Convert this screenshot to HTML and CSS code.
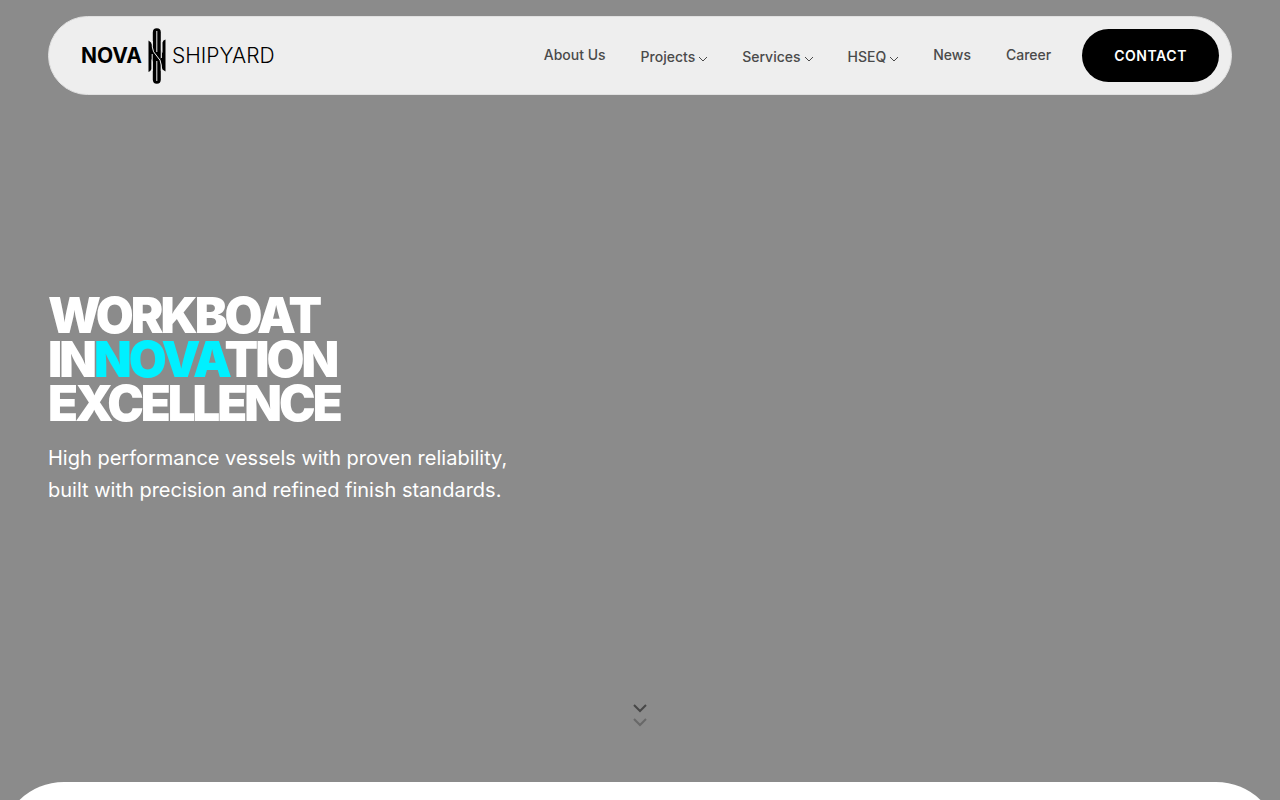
FILE: index.html
```html
<!DOCTYPE html>
<html lang="en">
<head>
<meta charset="utf-8">
<meta name="viewport" content="width=device-width, initial-scale=1">
<title>Nova Shipyard</title>
<link rel="stylesheet" href="styles.css">
</head>
<body>
<div class="page">
  <header class="header">
    <a class="logo" href="#" aria-label="Nova Shipyard">
      <span class="logo-nova">NOVA</span>
      <svg class="logo-mark" viewBox="0 0 18 56" width="18" height="56" aria-hidden="true">
        <path d="M4.800 4.500Q4.800 .3 8.800 .3T12.800 4.500V51.500Q12.800 55.700 8.800 55.700T4.800 51.500Z"/>
        <path class="logo-line" d="M8.800 3V24M8.800 33V53"/>
        <path d="M.5 12.500L3 14.500L5 19V34L3.500 31V41Q2.500 43.500 .5 44Z"/>
        <path d="M17.500 11.500Q15 12 14.500 14.500V25L12.800 22V36L14.500 41.500L17.500 43.500Z"/>
        <path class="logo-line" d="M4.300 13V19Q4.600 24 8.800 28T13.300 37V43"/>
        <path class="logo-cut" d="M13.400 30V13M4.200 26V43"/>
      </svg>
      <span class="logo-shipyard">SHIPYARD</span>
    </a>
    <nav class="nav" aria-label="Main">
      <a class="nav-link" href="#">About Us</a>
      <button class="nav-link nav-menu" type="button">Projects<svg class="caret" viewBox="1 0 8 6" width="8" height="6" aria-hidden="true"><path d="M1 1l4 4 4-4"/></svg></button>
      <button class="nav-link nav-menu" type="button">Services<svg class="caret" viewBox="1 0 8 6" width="8" height="6" aria-hidden="true"><path d="M1 1l4 4 4-4"/></svg></button>
      <button class="nav-link nav-menu" type="button">HSEQ<svg class="caret" viewBox="1 0 8 6" width="8" height="6" aria-hidden="true"><path d="M1 1l4 4 4-4"/></svg></button>
      <a class="nav-link" href="#">News</a>
      <a class="nav-link" href="#">Career</a>
      <a class="contact" href="#">CONTACT</a>
    </nav>
  </header>
  <main>
    <section class="hero">
      <h1 class="title">WORKBOAT<br>IN<span class="accent">NOVA</span>TION<br>EXCELLENCE</h1>
      <p class="lead">High performance vessels with proven reliability, built with precision and refined finish standards.</p>
      <a class="scroll" href="#next" aria-label="Scroll down">
        <svg viewBox="0 0 16 24" width="16" height="24" aria-hidden="true"><path class="scroll-first" d="M2 2l6 6 6-6"/><path class="scroll-second" d="M2 16l6 6 6-6"/></svg>
      </a>
    </section>
    <section class="next" id="next"></section>
  </main>
</div>
</body>
</html>
```

FILE: styles.css
```css
* {
  box-sizing: border-box;
}

body {
  margin: 0;
  font-family: Inter, "Liberation Sans", sans-serif;
  background: #8b8b8b;
}

.page {
  height: 100vh;
  overflow-y: auto;
  scrollbar-width: none;
}

.header {
  position: absolute;
  top: 16px;
  left: 48px;
  right: 48px;
  display: flex;
  align-items: center;
  justify-content: space-between;
  padding: 12px 12px 12px 32px;
  border: 1px solid #e0e0e0;
  border-radius: 40px;
  background: #eeeeee;
}

.logo {
  display: flex;
  align-items: center;
  gap: 6px;
  margin: -2px 0;
  color: #000000;
  font-size: 21px;
  line-height: 24px;
  text-decoration: none;
}

.logo-nova {
  font-weight: 700;
}

.logo-shipyard {
  font-weight: 300;
}

.logo-line,
.logo-cut {
  fill: none;
  stroke: #eeeeee;
  stroke-width: 1;
}

.nav {
  display: flex;
  align-items: center;
  gap: 35px;
}

.nav-link {
  padding: 0 0 2px;
  border: 0;
  background: none;
  color: #4a4a4a;
  font: 450 14px/20px Inter, "Liberation Sans", sans-serif;
  text-decoration: none;
}

.nav-menu {
  display: flex;
  align-items: center;
  gap: 4px;
  padding: 2px 0 0;
}

.caret {
  margin-top: 4px;
  overflow: visible;
  fill: none;
  stroke: #4a4a4a;
}

.contact {
  margin-left: -4px;
  padding: 16px 32px;
  border-radius: 28px;
  background: #000000;
  color: #ffffff;
  font-size: 14px;
  font-weight: 600;
  line-height: 21px;
  letter-spacing: 0.04em;
  text-decoration: none;
}

.hero {
  position: relative;
  display: flex;
  flex-direction: column;
  justify-content: center;
  gap: 16px;
  min-height: 100vh;
  padding: 0 48px;
}

.title {
  margin: 0;
  color: #ffffff;
  font-size: 49px;
  font-weight: 900;
  line-height: 44px;
  letter-spacing: -3px;
}

.accent {
  color: #00f0ff;
}

.lead {
  max-width: 500px;
  margin: 0;
  color: #ffffff;
  font-size: 20px;
  line-height: 32px;
}

.scroll {
  position: absolute;
  bottom: 73px;
  left: 50%;
  display: flex;
  margin-left: -8px;
}

.scroll path {
  fill: none;
  stroke: #474747;
  stroke-width: 2;
}

.scroll .scroll-second {
  stroke: #686868;
}

.next {
  position: relative;
  min-height: 128px;
  margin-top: -18px;
  border-radius: 64px 64px 0 0;
  background: #ffffff;
}
```
